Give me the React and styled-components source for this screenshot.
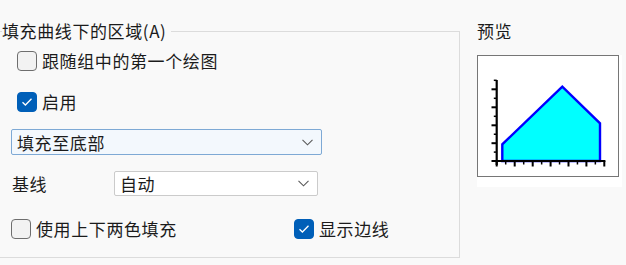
import React from "react";
import styled, { createGlobalStyle } from "styled-components";

const GlobalStyle = createGlobalStyle`
  html, body {
    margin: 0;
    padding: 0;
    background: #f9f9f9;
  }
  body {
    font-family: "Noto Sans CJK SC", "Noto Sans", sans-serif;
    font-size: 17px;
    color: #1b1b1b;
    overflow: hidden;
  }
`;

const Page = styled.div`
  display: flex;
  align-items: flex-start;
  width: 626px;
  height: 265px;
  overflow: hidden;
`;

const GroupBox = styled.div`
  position: relative;
  box-sizing: border-box;
  margin-left: -10px;
  margin-top: 31px;
  width: 470px;
  height: 227px;
  border: 1px solid #dcdcdc;
  padding: 19px 0 0 20px;
  display: flex;
  flex-direction: column;
`;

const GroupTitle = styled.span`
  position: absolute;
  left: 11px;
  top: -13px;
  padding-right: 5px;
  background: #f9f9f9;
  line-height: 24px;
  letter-spacing: 0.6px;
`;

const Row = styled.div`
  display: flex;
  align-items: center;
  margin-top: ${(p) => p.$top || 0}px;
  margin-left: ${(p) => p.$indent || 0}px;
`;

const CheckRow = styled.label`
  display: flex;
  align-items: center;
  gap: 5px;
  letter-spacing: 0.6px;
  line-height: 20px;
`;

const Box = styled.span`
  box-sizing: border-box;
  width: 20px;
  height: 20px;
  border-radius: 4px;
  display: flex;
  align-items: center;
  justify-content: center;
  background: ${(p) => (p.$checked ? "#005fb8" : "#f2f2f2")};
  border: 1px solid ${(p) => (p.$checked ? "#005fb8" : "#6e6e6e")};
`;

const Check = ({ checked, children }) => (
  <CheckRow>
    <Box $checked={checked}>
      {checked && (
        <svg width="12" height="10" viewBox="0 0 12 10">
          <path d="M1.5 5.2 L4.4 8 L10.5 1.8" fill="none" stroke="#fff" strokeWidth="1.3" />
        </svg>
      )}
    </Box>
    <span>{children}</span>
  </CheckRow>
);

const Select = styled.div`
  box-sizing: border-box;
  display: flex;
  align-items: center;
  justify-content: space-between;
  width: ${(p) => p.$width}px;
  height: ${(p) => p.$height}px;
  padding: 0 8px 0 ${(p) => p.$pad}px;
  border: 1px solid ${(p) => (p.$focused ? "#7ea9d5" : "#cbcbcb")};
  border-radius: 2px;
  background: ${(p) => (p.$focused ? "#f3f8fd" : "#ffffff")};
  letter-spacing: 0.6px;
`;

const Chevron = () => (
  <svg width="11" height="7" viewBox="0 0 11 7">
    <path d="M0.5 0.8 L5.5 5.8 L10.5 0.8" fill="none" stroke="#5a5a5a" strokeWidth="1.1" />
  </svg>
);

const BaseRow = styled.div`
  display: grid;
  grid-template-columns: 102px 204px;
  align-items: center;
  margin-top: 16px;
  margin-left: 1px;
`;

const Label = styled.span`
  letter-spacing: 0.6px;
`;

const BottomRow = styled.div`
  display: grid;
  grid-template-columns: 283px auto;
  margin-top: 23px;
`;

const PreviewColumn = styled.div`
  display: flex;
  flex-direction: column;
  margin-left: 17px;
  margin-top: 19px;
`;

const PreviewTitle = styled.span`
  line-height: 24px;
  letter-spacing: 0.6px;
`;

const PreviewPanel = styled.div`
  margin-top: 12px;
  width: 145px;
  height: 132px;
  background: #ffffff;
`;

const ChartFrame = styled.div`
  box-sizing: border-box;
  width: 142px;
  height: 122px;
  border: 1px solid #767676;
  background: #ffffff;
`;

const Chart = () => {
  const xMajor = [18.7, 36.7, 54.7, 72.6, 90.5, 108.4, 126.3];
  const yMajor = [33.3, 51.3, 69.3, 87.2, 105];
  const xMinor = xMajor.slice(0, -1).map((x, i) => (x + xMajor[i + 1]) / 2);
  const yMinor = [24.3, ...yMajor.slice(0, -1).map((y, i) => (y + yMajor[i + 1]) / 2)];
  return (
    <svg width="140" height="120" viewBox="0 0 140 120">
      <polygon
        points="24.3,105 24.3,88.3 84.3,30.7 122,67.3 122,105"
        fill="#00ffff"
        stroke="#0000ff"
        strokeWidth="2.4"
        strokeLinejoin="miter"
      />
      <line x1="18.7" y1="24" x2="18.7" y2="109" stroke="#000" strokeWidth="2.2" />
      <line x1="17.6" y1="105" x2="127.4" y2="105" stroke="#000" strokeWidth="2.2" />
      {xMajor.map((x) => (
        <line key={"xM" + x} x1={x} y1="105" x2={x} y2="110.5" stroke="#000" strokeWidth="2" />
      ))}
      {xMinor.map((x) => (
        <line key={"xm" + x} x1={x} y1="105" x2={x} y2="108.5" stroke="#000" strokeWidth="1.5" />
      ))}
      {yMajor.map((y) => (
        <line key={"yM" + y} x1="13.5" y1={y} x2="18.7" y2={y} stroke="#000" strokeWidth="2" />
      ))}
      {yMinor.map((y) => (
        <line key={"ym" + y} x1="15.8" y1={y} x2="18.7" y2={y} stroke="#000" strokeWidth="1.5" />
      ))}
    </svg>
  );
};

export default function App() {
  return (
    <>
      <GlobalStyle />
      <Page>
        <GroupBox>
          <GroupTitle>填充曲线下的区域(A)</GroupTitle>
          <Row $indent={6}>
            <Check checked={false}>跟随组中的第一个绘图</Check>
          </Row>
          <Row $indent={6} $top={21}>
            <Check checked>启用</Check>
          </Row>
          <Row $top={17}>
            <Select $width={311} $height={26} $pad={5} $focused>
              <span>填充至底部</span>
              <Chevron />
            </Select>
          </Row>
          <BaseRow>
            <Label>基线</Label>
            <Select $width={204} $height={25} $pad={5}>
              <span>自动</span>
              <Chevron />
            </Select>
          </BaseRow>
          <BottomRow>
            <Check checked={false}>使用上下两色填充</Check>
            <Check checked>显示边线</Check>
          </BottomRow>
        </GroupBox>
        <PreviewColumn>
          <PreviewTitle>预览</PreviewTitle>
          <PreviewPanel>
            <ChartFrame>
              <Chart />
            </ChartFrame>
          </PreviewPanel>
        </PreviewColumn>
      </Page>
    </>
  );
}
